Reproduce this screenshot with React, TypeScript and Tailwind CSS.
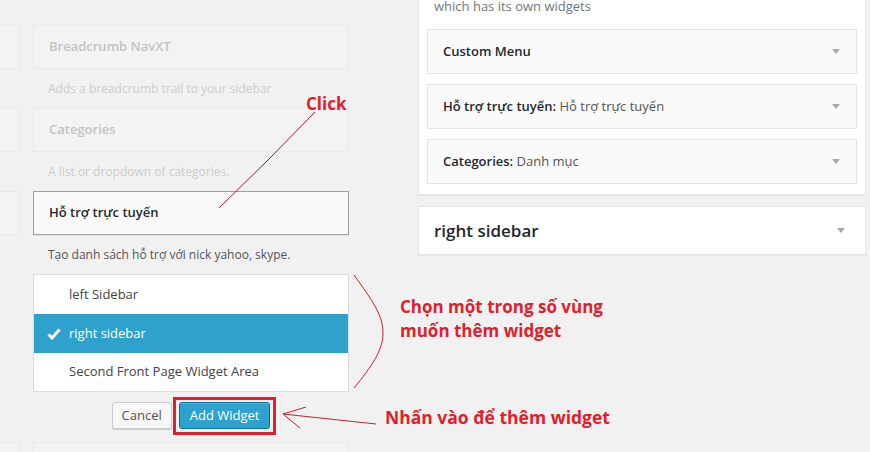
import React from "react";

const FadedBox = ({ title }: { title?: string }) => (
  <div className="flex h-[44px] items-center border border-[#e9e9e9] bg-[#f3f3f3] px-[15px] text-[13px] font-semibold text-[#c3c3c3]">
    {title}
  </div>
);

const FadedDesc = ({ text }: { text?: string }) => (
  <div className="flex h-[39px] items-center px-[15px] text-[12px] text-[#cdcdcd]">{text}</div>
);

const Caret = () => (
  <span className="h-0 w-0 border-x-[4px] border-t-[5px] border-x-transparent border-t-[#a7aaad]" />
);

const sidebarWidgets = [
  { title: "Custom Menu", sub: "" },
  { title: "Hỗ trợ trực tuyến:", sub: "Hỗ trợ trực tuyến" },
  { title: "Categories:", sub: "Danh mục" },
];

const areas = ["left Sidebar", "right sidebar", "Second Front Page Widget Area"];
const rowHeights = ["h-[39px]", "h-[39px]", "h-[38px]"];

export default function App() {
  return (
    <div className="relative h-[452px] w-[870px] overflow-hidden bg-[#f1f1f1] font-['Open_Sans',sans-serif] text-[#23282d]">
      <div className="flex">
        {/* cut-off column of available widgets */}
        <div className="w-[20px] shrink-0 pt-[25px]">
          <div className="h-[44px] border border-l-0 border-[#e9e9e9] bg-[#f3f3f3]" />
          <div className="h-[39px]" />
          <div className="h-[44px] border border-l-0 border-[#e9e9e9] bg-[#f3f3f3]" />
          <div className="h-[39px]" />
          <div className="h-[44px] border border-l-0 border-[#e9e9e9] bg-[#f3f3f3]" />
          <div className="h-[207px]" />
          <div className="h-[44px] border border-l-0 border-[#e9e9e9] bg-[#f3f3f3]" />
        </div>

        {/* available widgets */}
        <div className="ml-[13px] w-[316px] shrink-0 pt-[25px]">
          <FadedBox title="Breadcrumb NavXT" />
          <FadedDesc text="Adds a breadcrumb trail to your sidebar" />
          <FadedBox title="Categories" />
          <FadedDesc text="A list or dropdown of categories." />

          <div className="flex h-[44px] items-center border border-[#a0a0a0] bg-[#fafafa] px-[15px] text-[13px] font-semibold shadow-[0_1px_1px_rgba(0,0,0,0.05)]">
            Hỗ trợ trực tuyến
          </div>
          <div className="flex h-[39px] items-center px-[15px] text-[12px] text-[#555]">
            Tạo danh sách hỗ trợ với nick yahoo, skype.
          </div>

          <div className="border border-[#dcdcde] bg-white">
            {areas.map((a, i) => (
              <div
                key={a}
                className={
                  i === 1
                    ? `flex ${rowHeights[i]} items-center bg-[#2ea2cc] pl-[13px] text-[13px] text-white`
                    : `flex ${rowHeights[i]} items-center pl-[35px] text-[13px] text-[#444]`
                }
              >
                {i === 1 && (
                  <svg width="14" height="12" viewBox="0 0 14 12" className="mr-[8px]">
                    <path d="M1.5 6.5 L5 10 L12.5 1.5" fill="none" stroke="white" strokeWidth="3" />
                  </svg>
                )}
                {a}
              </div>
            ))}
          </div>

          <div className="mt-[10px] flex justify-center gap-[7px]">
            <button className="h-[27px] rounded-[3px] border border-[#ccc] bg-[#f7f7f7] px-[9px] text-[13px] text-[#555] shadow-[0_1px_0_#ccc]">
              Cancel
            </button>
            <button className="h-[27px] rounded-[3px] border border-[#0074a2] bg-[#2ea2cc] px-[10px] text-[13px] text-white shadow-[inset_0_1px_0_rgba(120,200,230,0.5)]">
              Add Widget
            </button>
          </div>

          <div className="mt-[13px] h-[44px] border border-[#e9e9e9] bg-[#f3f3f3]" />
        </div>

        {/* sidebars */}
        <div className="ml-[69px] w-[448px] shrink-0">
          <div className="-mt-[3px] border border-t-0 border-[#e5e5e5] bg-white px-[8px] pb-[10px] shadow-[0_1px_1px_rgba(0,0,0,0.04)]">
            <p className="mb-[14px] px-[7px] text-[13px] leading-[18px] text-[#72777c]">which has its own widgets</p>
            <div className="flex flex-col gap-[10px]">
              {sidebarWidgets.map((w) => (
                <div
                  key={w.title}
                  className="flex h-[45px] items-center justify-between border border-[#e5e5e5] bg-[#fafafa] pl-[15px] pr-[16px] text-[13px]"
                >
                  <span>
                    <span className="font-semibold">{w.title}</span>
                    {w.sub && <span className="text-[#555]"> {w.sub}</span>}
                  </span>
                  <Caret />
                </div>
              ))}
            </div>
          </div>

          <div className="mt-[11px] flex h-[49px] items-center justify-between border border-[#e5e5e5] bg-white pl-[15px] pr-[20px] text-[17px] font-semibold shadow-[0_1px_1px_rgba(0,0,0,0.04)]">
            right sidebar
            <Caret />
          </div>
        </div>
      </div>

      {/* annotations */}
      <svg className="pointer-events-none absolute left-0 top-0" width="870" height="452">
        <path d="M315 112 L268 160 L219 208" fill="none" stroke="#b3132b" strokeWidth="1" />
        <path d="M354 275 C372 300 383 315 383 333 C383 350 372 366 354 388" fill="none" stroke="#c8202e" strokeWidth="1" />
        <path d="M376 424 L283 414 M283 414 L306 407 M283 414 L300 428" fill="none" stroke="#c8202e" strokeWidth="1" />
      </svg>
      <div className="pointer-events-none absolute left-[173px] top-[397px] h-[38px] w-[103px] border-[3px] border-[#e0202a]" />
      <div className="pointer-events-none absolute left-[306px] top-[92px] text-[17px] font-bold leading-[24px] text-[#e0202a]">Click</div>
      <div className="pointer-events-none absolute left-[400px] top-[295px] text-[17px] font-bold leading-[24px] text-[#e0202a]">
        Chọn một trong số vùng
        <br />
        muốn thêm widget
      </div>
      <div className="pointer-events-none absolute left-[385px] top-[405px] text-[17.5px] font-bold leading-[24px] text-[#e0202a]">
        Nhấn vào để thêm widget
      </div>
    </div>
  );
}
